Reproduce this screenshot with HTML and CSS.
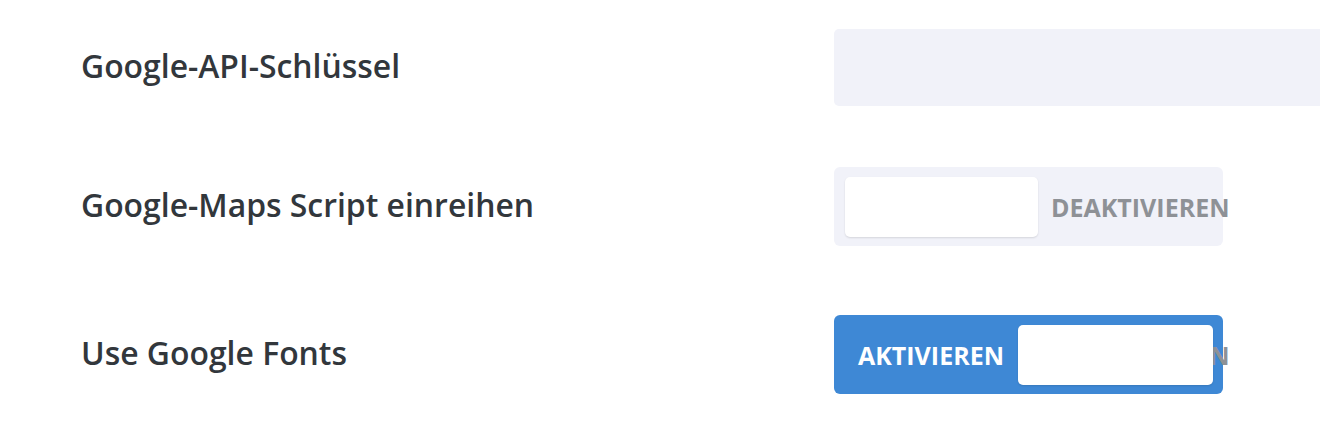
FILE: index.html
```html
<!DOCTYPE html>
<html lang="de">
<head>
<meta charset="utf-8">
<title>Einstellungen</title>
<link rel="stylesheet" href="styles.css">
</head>
<body>
<div class="settings">
  <div class="row row-input">
    <div class="label">Google-API-Schlüssel</div>
    <div class="control"><input class="text-input" type="text" aria-label="Google-API-Schlüssel"></div>
  </div>
  <div class="row row-toggle-off">
    <div class="label">Google-Maps Script einreihen</div>
    <div class="control">
      <div class="toggle off">
        <span class="opt opt-on">AKTIVIEREN</span>
        <span class="opt opt-off">DEAKTIVIEREN</span>
        <span class="knob"></span>
      </div>
    </div>
  </div>
  <div class="row row-toggle-on">
    <div class="label">Use Google Fonts</div>
    <div class="control">
      <div class="toggle on">
        <span class="opt opt-on">AKTIVIEREN</span>
        <span class="opt opt-off">DEAKTIVIEREN</span>
        <span class="knob"></span>
      </div>
    </div>
  </div>
</div>
</body>
</html>
```

FILE: styles.css
```css
html, body {
  margin: 0;
  padding: 0;
  background: #ffffff;
  overflow: hidden;
}
body {
  font-family: "Open Sans", "Liberation Sans", sans-serif;
  width: 1320px;
  height: 426px;
}
.settings {
  display: flex;
  flex-direction: column;
  padding-top: 29px;
}
.row {
  display: grid;
  grid-template-columns: 753px 1fr;
  align-items: center;
  padding-left: 81px;
}
.row-input { margin-bottom: 61px; }
.row-toggle-off { margin-bottom: 69px; }
.label {
  font-size: 31.9px;
  font-weight: 600;
  color: #32373c;
  line-height: 1.2;
  margin-top: -2px;
}
.control {
  display: flex;
  align-items: center;
  min-width: 0;
}
.text-input {
  box-sizing: border-box;
  width: 520px;
  height: 77px;
  border: none;
  border-radius: 5px;
  background: #f1f2f9;
  outline: none;
  margin: 0;
  padding: 0 20px;
  flex-shrink: 0;
}
.toggle {
  position: relative;
  box-sizing: border-box;
  width: 389px;
  height: 79px;
  border-radius: 6px;
  background: #f1f2f9;
  display: flex;
  align-items: center;
  font-size: 25px;
  font-weight: 700;
  white-space: nowrap;
}
.toggle.on { background: #3e88d5; }
.opt {
  display: block;
  flex-shrink: 0;
}
.opt-on {
  color: #ffffff;
  margin-left: 24px;
  width: 193px;
}
.opt-off {
  color: #8e9196;
}
.knob {
  position: absolute;
  top: 10px;
  width: 193px;
  height: 60px;
  border-radius: 5px;
  background: #ffffff;
  box-shadow: 0 1px 2px rgba(0, 0, 0, 0.12);
}
.toggle.off .knob { left: 11px; }
.toggle.on .knob { left: 184px; width: 195px; }
```
